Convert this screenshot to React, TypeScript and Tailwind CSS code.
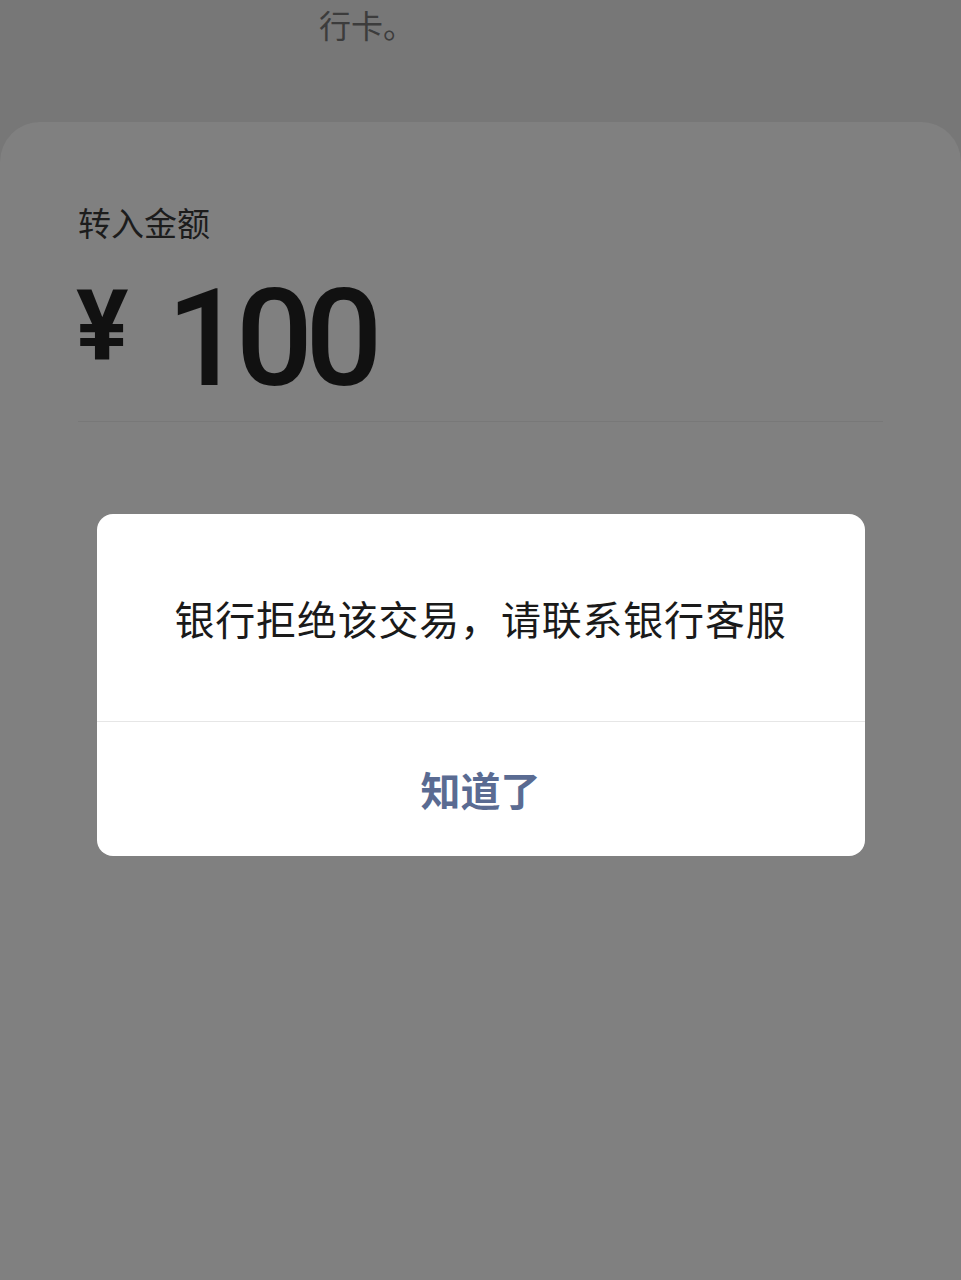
const cjk = { fontFamily: '"Noto Sans CJK SC", "Noto Sans", sans-serif' };
const num = { fontFamily: 'Roboto, "Liberation Sans", sans-serif' };

function AlertDialog({ message, action }: { message: string; action: string }) {
  return (
    <div className="absolute inset-0 flex items-start justify-center pt-[514px]">
      <div className="w-[768px] bg-white rounded-[16px] overflow-hidden" style={cjk}>
        <div className="h-[208px] flex items-center justify-center border-b border-[#e6e6e6]">
          <p className="text-[40px] leading-none text-[#1a1a1a] tracking-[0.8px]">{message}</p>
        </div>
        <button className="w-full h-[134px] flex items-center justify-center">
          <span className="text-[40px] leading-none font-bold text-[#5a6b92]">{action}</span>
        </button>
      </div>
    </div>
  );
}

export default function App() {
  return (
    <div className="relative w-full min-h-[1280px] bg-[#777777] flex flex-col overflow-hidden">
      <div className="h-[122px] pl-[319px] pt-[4px]" style={cjk}>
        <span className="text-[32px] leading-[40px] text-[#3c3c3c]">行卡。</span>
      </div>

      <div className="flex-1 bg-[#808080] rounded-t-[40px] px-[78px] pt-[80px]">
        <p className="text-[33px] leading-[40px] text-[#1c1c1c]" style={cjk}>
          转入金额
        </p>
        <div className="flex items-center mt-[40px] h-[120px]" style={num}>
          <span className="text-[98px] leading-none font-bold text-[#111111] mt-[-30px] ml-[-2px]">¥</span>
          <span className="ml-[38px] text-[136px] leading-none font-medium text-[#111111] tracking-[-8px] mt-[-6px]">
            100
          </span>
        </div>
        <div className="mt-[19px] border-b border-[#787878]" />
      </div>

      <AlertDialog message="银行拒绝该交易，请联系银行客服" action="知道了" />
    </div>
  );
}
